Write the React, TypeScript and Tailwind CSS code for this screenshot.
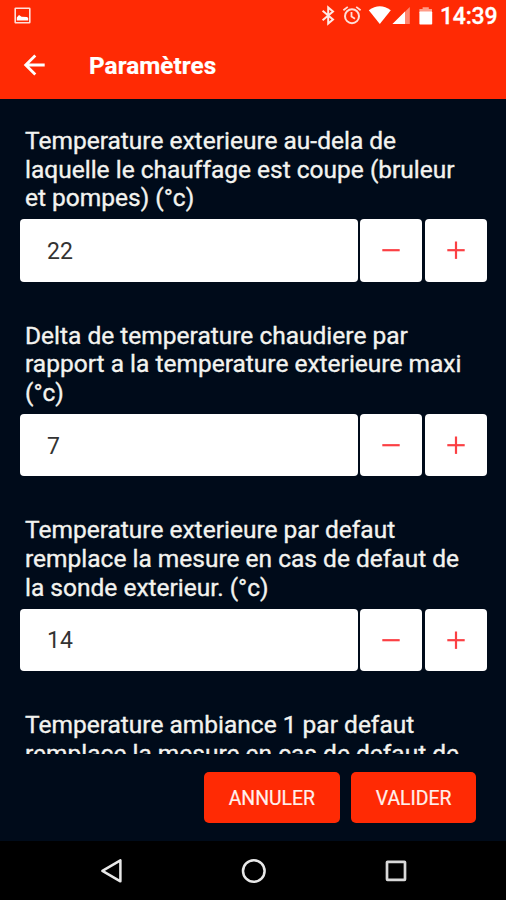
import React from "react";

type Setting = { lines: string[]; value?: string };

const settings: Setting[] = [
  {
    lines: ["Temperature exterieure au-dela de", "laquelle le chauffage est coupe (bruleur", "et pompes) (°c)"],
    value: "22",
  },
  {
    lines: ["Delta de temperature chaudiere par", "rapport a la temperature exterieure maxi", "(°c)"],
    value: "7",
  },
  {
    lines: ["Temperature exterieure par defaut", "remplace la mesure en cas de defaut de", "la sonde exterieur. (°c)"],
    value: "14",
  },
  {
    lines: ["Temperature ambiance 1 par defaut", "remplace la mesure en cas de defaut de"],
  },
];

function StatusBar() {
  return (
    <div className="flex h-8 items-start pl-[14px] pr-[9px] text-white">
      <svg className="mt-[7px] h-[17px] w-[17px]" viewBox="0 0 17 17" fill="none">
        <rect x="1.2" y="1.2" width="14.6" height="14.6" rx="0.6" stroke="#ffe0da" strokeWidth="1.6" />
        <path d="M2.8 13.4V10.4L5 8L7.6 9.8L13 10L14.2 11V13.4Z" fill="#fff" />
      </svg>
      <svg className="ml-auto h-8 w-[114px]" viewBox="321 0 114 32" fill="none">
        <path d="M322.6 10.8L333 19.4L328.2 23.6V7.4L333 11.4L322.6 20.2" stroke="#ffe9e4" strokeWidth="2" />
        <circle cx="352" cy="16.2" r="7" stroke="#ffded7" strokeWidth="2" />
        <path d="M351.5 12V16.6L355 18.7M343.4 10.3L347.8 6.9M356.2 6.9L360.6 10.3" stroke="#ffded7" strokeWidth="1.8" />
        <path d="M368.8 10.2Q379.8 2.4 390.8 10.2L379.8 24Z" fill="#fff" />
        <path d="M409.8 7V24H392.5Z" fill="#ff8770" />
        <path d="M405 11.6V24H392.5Z" fill="#fff" />
        <path d="M419.4 9H422.6V7.2H428.8V9H432V12H419.4Z" fill="#ff9b87" />
        <rect x="419.4" y="11.4" width="12.8" height="13.2" rx="0.8" fill="#fff" />
      </svg>
      <span className="ml-[5px] mt-[3px] w-[57px] whitespace-nowrap text-[23px] font-medium leading-[28px] tracking-[-0.2px] [-webkit-text-stroke:0.3px_#fff]">14:39</span>
    </div>
  );
}

function StepButton({ plus = false }: { plus?: boolean }) {
  return (
    <button
      aria-label={plus ? "Augmenter" : "Diminuer"}
      className="flex h-full w-[62.4px] items-center justify-center rounded-[4px] bg-white"
    >
      <svg className="h-[20px] w-[20px]" viewBox="0 0 20 20" fill="none" stroke="#fb4044" strokeWidth="2.2">
        <path d="M1.3 10.2H18.7" />
        {plus && <path d="M10 1.5V18.9" />}
      </svg>
    </button>
  );
}

function Field({ lines, value }: Setting) {
  return (
    <section className="h-[194.7px] shrink-0">
      <div className="mb-[6.2px] pl-[5px] text-[24.5px] leading-[28.7px] text-[#f3f3ef] [-webkit-text-stroke:0.35px_#f3f3ef]">
        {lines.map((line) => (
          <div key={line} className="whitespace-nowrap">{line}</div>
        ))}
      </div>
      {value && (
        <div className="flex h-[62.5px] gap-[2.1px]">
          <div className="flex w-[338px] items-center rounded-[4px] bg-white pl-[27px] pt-[3px] text-[23px] leading-[28px] text-[#333]">{value}</div>
          <StepButton />
          <StepButton plus />
        </div>
      )}
    </section>
  );
}

export default function App() {
  return (
    <div className="flex h-[900px] w-[506px] flex-col overflow-hidden bg-[#000b1a] font-['Roboto',sans-serif]">
      <header className="h-[98.6px] shrink-0 bg-[#ff2a04]">
        <StatusBar />
        <div className="flex h-[66px] items-center pl-[23px] text-white">
          <svg className="h-[22px] w-[22px]" viewBox="0 0 22 22" fill="none" stroke="#fff" strokeWidth="2.8">
            <path d="M21.7 11H2.7M12.3 1.4L2.7 11L12.3 20.6" />
          </svg>
          <h1 className="ml-[44px] mt-[2px] whitespace-nowrap text-[24.3px] font-bold leading-[28px] tracking-[0.05px] [-webkit-text-stroke:0.2px_#fff]">Paramètres</h1>
        </div>
      </header>
      <main className="flex h-[655.9px] shrink-0 flex-col overflow-hidden pl-[20px] pt-[28.3px]">
        {settings.map((s) => <Field key={s.lines[0]} {...s} />)}
      </main>
      <footer className="flex h-[87px] shrink-0 items-start justify-end gap-[11.5px] pr-[29.7px] pt-[17.4px] text-[19.4px] text-[#fff0ec]">
        <button className="h-[51.6px] w-[135.3px] rounded-[5px] bg-[#ff2a04] pt-[2px] [-webkit-text-stroke:0.2px_#fff0ec]">ANNULER</button>
        <button className="h-[51.6px] w-[125.3px] rounded-[5px] bg-[#ff2a04] pt-[2px] [-webkit-text-stroke:0.2px_#fff0ec]">VALIDER</button>
      </footer>
      <nav className="flex flex-1 items-center bg-black">
        <svg className="ml-[100px] h-6 w-6" viewBox="0 0 24 24" fill="none" stroke="#e8e8e8" strokeWidth="2.5" strokeLinejoin="round">
          <path d="M20.4 1.3V22.3L2.4 11.8Z" />
        </svg>
        <svg className="ml-[117px] h-[26px] w-[26px]" viewBox="0 0 26 26" fill="none" stroke="#e8e8e8" strokeWidth="2.5">
          <circle cx="12.8" cy="13" r="10.8" />
        </svg>
        <svg className="ml-[117px] h-6 w-6" viewBox="0 0 24 24" fill="none" stroke="#d8d8d8" strokeWidth="2.7">
          <rect x="3" y="2.8" width="18" height="18" rx="0.5" />
        </svg>
      </nav>
    </div>
  );
}
